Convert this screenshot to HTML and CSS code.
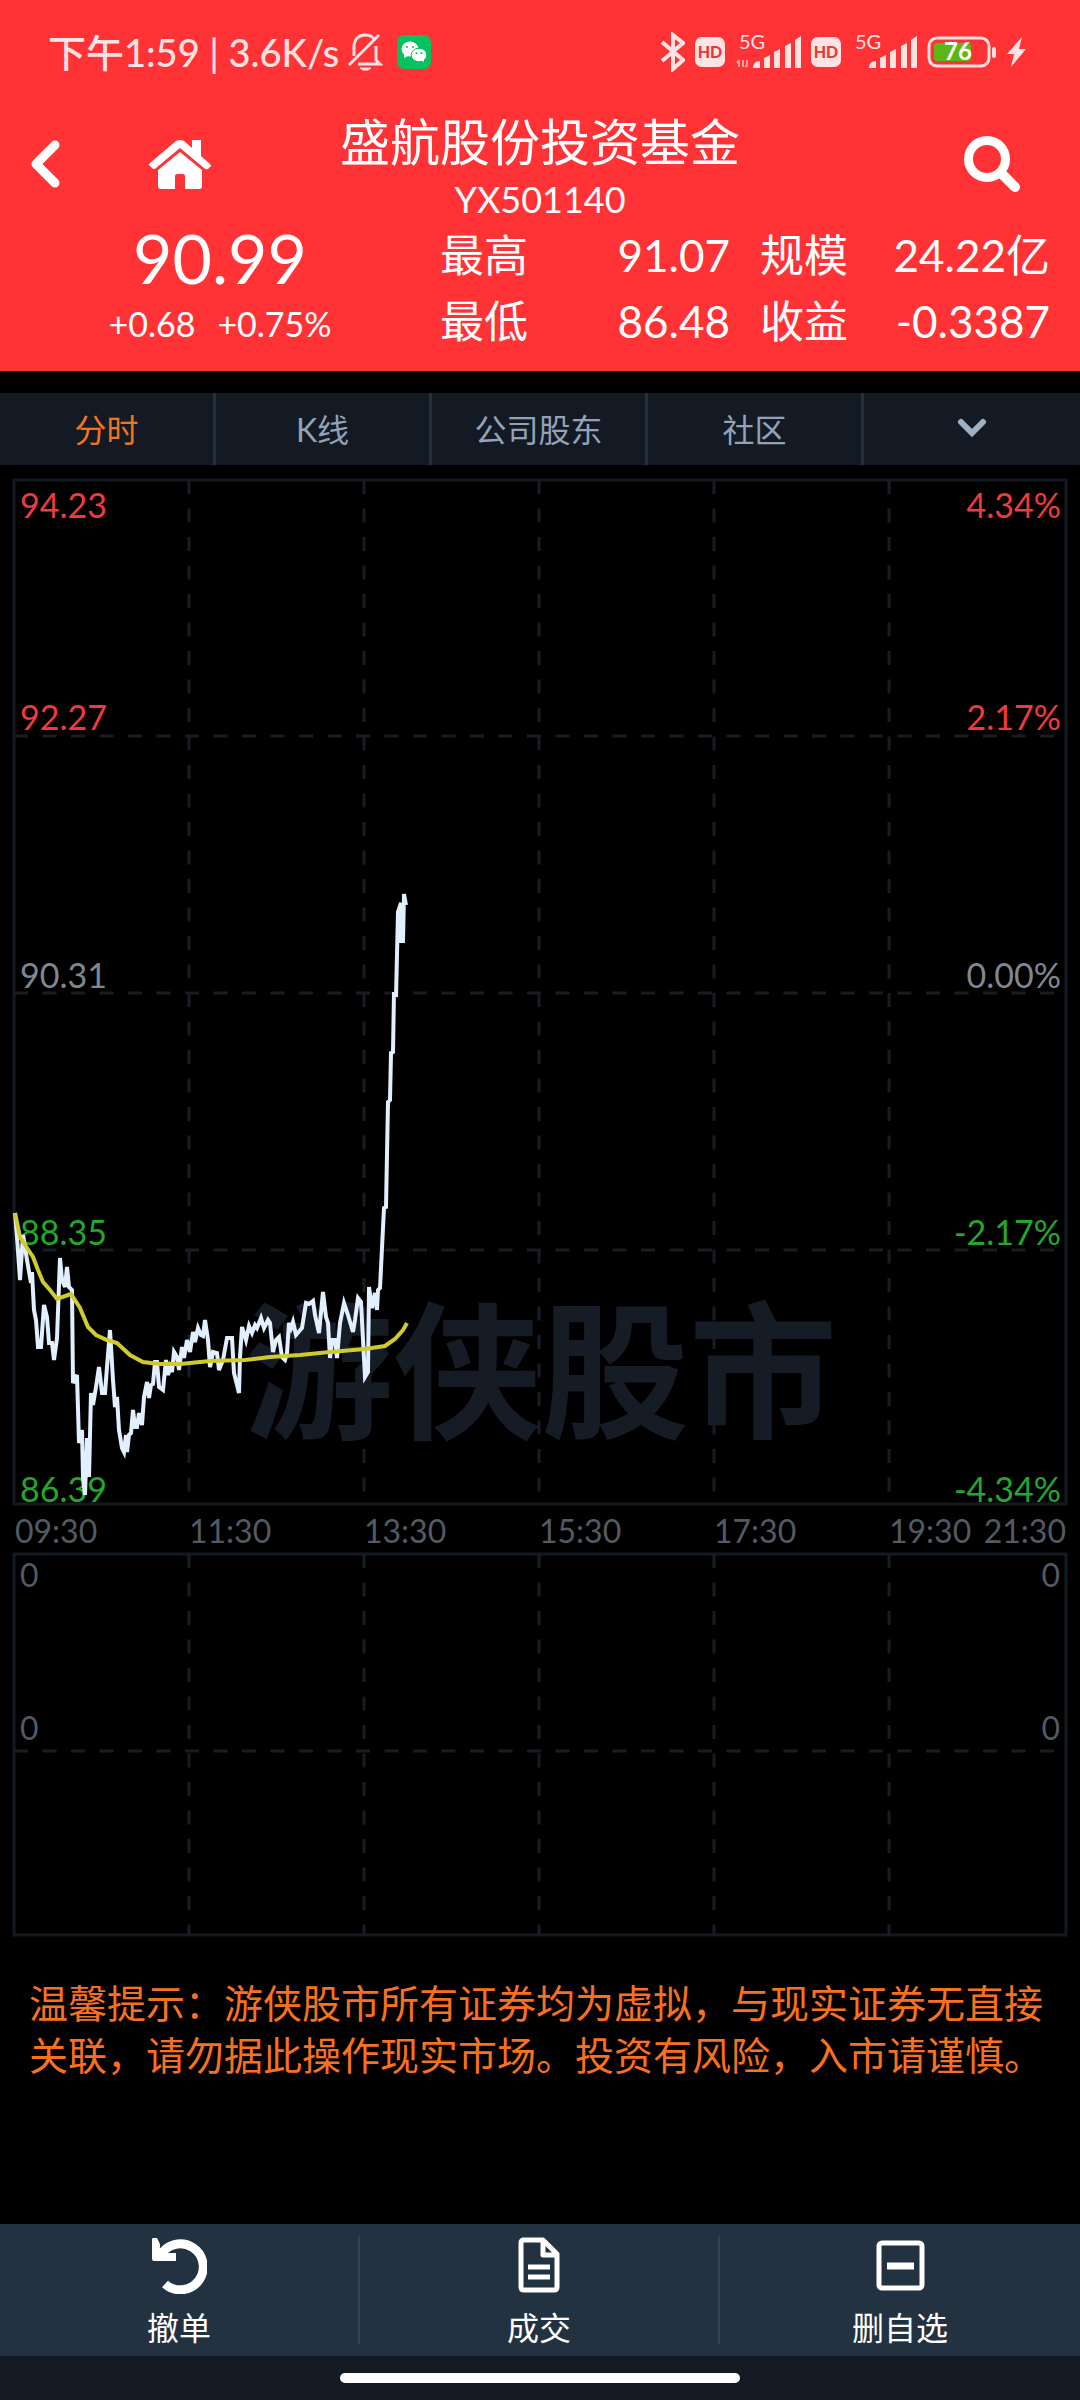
FILE: index.html
```html
<!DOCTYPE html>
<html lang="zh-CN">
<head>
    <meta charset="UTF-8">
    <meta name="viewport" content="width=device-width, initial-scale=1">
    <title>盛航股份投资基金</title>
    <link rel="stylesheet" href="styles.css">
</head>
<body>

    <header class="header">
        <div class="status">
            <span class="status-text">下午1:59 | 3.6K/s</span>
            <svg class="bell" width="36" height="40" viewBox="0 0 36 40" fill="none" stroke="#ffe3e3" stroke-width="3">
                <path d="M7 24V15C7 7 12 3 18 3c4 0 7 1 9 4M29 14v14l4 4H11M2 33L32 3"/>
                <path d="M13 36h11l-3 2h-5z" fill="#ffe3e3" stroke-width="1"/>
            </svg>
            <svg width="34" height="34" viewBox="0 0 34 34">
                <rect width="34" height="34" rx="7" fill="#07c160"/>
                <ellipse cx="13" cy="14" rx="8.5" ry="7.5" fill="#fff"/>
                <path d="M7 19l0 4 4-2z" fill="#fff"/>
                <ellipse cx="22" cy="20" rx="7.8" ry="6.8" fill="#fff" stroke="#07c160"/>
                <path d="M24 25l3 2v-4z" fill="#fff"/>
                <g fill="#07c160"><circle cx="10" cy="12" r="1"/><circle cx="16" cy="12" r="1"/><circle cx="19.500" cy="18" r="1"/><circle cx="24.500" cy="18" r="1"/></g>
            </svg>
            <div class="status-icons">
                <svg width="24" height="40" viewBox="0 0 24 40" fill="none" stroke="#ffe3e3" stroke-width="4">
                    <path d="M1 10l21 18-10 9V3l10 8L1 29"/>
                </svg>
                <span class="hd">HD</span>
                <svg width="66" height="52" viewBox="0 -6 66 52" fill="#ffe3e3">
                    <text class="net" x="4" y="17">5G</text>
                    <path d="M4 28v7M2 31l2-3M8 28v7M12 28v7M10 35l2-2" stroke="#ff9a9a" stroke-width="2"/>
                    <path d="M18 36q0-7 7-7v7zM29 36V26l6-3v13zM39 36V20l6-3v19zM50 36V14l6-3v25zM60 36V8l6-4v32z"/>
                </svg>
                <span class="hd">HD</span>
                <svg width="66" height="52" viewBox="0 -6 66 52" fill="#ffe3e3">
                    <text class="net" x="4" y="17">5G</text>
                    <path d="M18 36q0-7 7-7v7zM29 36V26l6-3v13zM39 36V20l6-3v19zM50 36V14l6-3v25zM60 36V8l6-4v32z"/>
                </svg>
                <svg width="70" height="32" viewBox="0 0 70 32">
                    <rect x="2" y="2" width="60" height="28" rx="8" fill="none" stroke="#ffdede" stroke-width="3"/>
                    <rect x="7" y="7" width="37" height="18" rx="3" fill="#5cb615"/>
                    <rect x="65" y="11" width="4" height="11" rx="2" fill="#ffdede"/>
                    <text class="level" x="31" y="24" text-anchor="middle">76</text>
                </svg>
                <svg width="19" height="32" viewBox="0 0 19 32" fill="#ffe3e3">
                    <path d="M15 1L0 18h7L4 31 19 13h-7z"/>
                </svg>
            </div>
        </div>

        <div class="nav">
            <div class="nav-left">
                <button type="button" class="icon-btn" aria-label="返回">
                    <svg width="30" height="50" viewBox="0 0 30 50" fill="none" stroke="#fff" stroke-width="9" stroke-linecap="round" stroke-linejoin="round">
                        <path d="M25 6L6 25l19 19"/>
                    </svg>
                </button>
                <button type="button" class="icon-btn" aria-label="首页">
                    <svg width="64" height="50" viewBox="0 0 64 50" fill="#fff">
                        <path d="M32 1q2 0 4 1l8 7V1h9v16l9 8q2 2 0 3l-2 2q-2 1-4-1L32 9 8 29q-2 2-4 0l-2-2q-2-1 0-3L28 2q2-1 4-1z"/>
                        <path d="M32 13l22 18v16q0 3-3 3H37V37q0-2-2-2h-6q-2 0-2 2v13H13q-3 0-3-3V31z"/>
                    </svg>
                </button>
            </div>
            <div class="nav-title">
                <h1>盛航股份投资基金</h1>
                <p>YX501140</p>
            </div>
            <div class="nav-right">
                <button type="button" class="icon-btn" aria-label="搜索">
                    <svg width="56" height="56" viewBox="0 0 56 56" fill="none" stroke="#fff">
                        <circle cx="23" cy="23" r="18.500" stroke-width="9"/>
                        <path d="M38 38l13 13" stroke-width="10" stroke-linecap="round"/>
                    </svg>
                </button>
            </div>
        </div>

        <div class="quote">
            <div class="price">
                <div class="last">90.99</div>
                <div class="change"><span>+0.68</span><span>+0.75%</span></div>
            </div>
            <dl class="stats">
                <div><dt>最高</dt><dd>91.07</dd></div>
                <div><dt>最低</dt><dd>86.48</dd></div>
            </dl>
            <dl class="stats">
                <div><dt>规模</dt><dd>24.22亿</dd></div>
                <div><dt>收益</dt><dd>-0.3387</dd></div>
            </dl>
        </div>
    </header>

    <nav class="tabs">
        <button type="button" class="active">分时</button>
        <button type="button">K线</button>
        <button type="button">公司股东</button>
        <button type="button">社区</button>
        <button type="button" aria-label="更多">
            <svg width="30" height="20" viewBox="0 0 30 20" fill="none" stroke="#9fb0c3" stroke-width="6" stroke-linecap="round">
                <path d="M4 4l11 11L26 4"/>
            </svg>
        </button>
    </nav>

    <main>
        <svg class="chart" viewBox="0 465 1080 1480">
            <text class="watermark" x="245" y="1427">游侠股市</text>

            <!-- price grid -->
            <rect class="frame" x="14" y="480" width="1052" height="1024"/>
            <path class="grid" d="M189 480V1504M364 480V1504M539 480V1504M714 480V1504M889 480V1504M14 736H1066M14 993H1066M14 1250H1066"/>

            <!-- volume grid -->
            <rect class="frame" x="14" y="1554" width="1052" height="381"/>
            <path class="grid" d="M189 1554V1935M364 1554V1935M539 1554V1935M714 1554V1935M889 1554V1935M14 1751H1066"/>

            <g class="up">
                <text x="20" y="518">94.23</text>
                <text x="20" y="730">92.27</text>
                <text class="end" x="1061" y="518">4.34%</text>
                <text class="end" x="1061" y="730">2.17%</text>
            </g>
            <g class="flat">
                <text x="20" y="988">90.31</text>
                <text class="end" x="1061" y="988">0.00%</text>
            </g>
            <g class="down">
                <text x="20" y="1245">88.35</text>
                <text x="20" y="1502">86.39</text>
                <text class="end" x="1061" y="1245">-2.17%</text>
                <text class="end" x="1061" y="1502">-4.34%</text>
            </g>
            <g class="time">
                <text x="15" y="1543">09:30</text>
                <text x="189" y="1543">11:30</text>
                <text x="364" y="1543">13:30</text>
                <text x="539" y="1543">15:30</text>
                <text x="714" y="1543">17:30</text>
                <text x="889" y="1543">19:30</text>
                <text class="end" x="1066" y="1543">21:30</text>
                <text x="20" y="1587">0</text>
                <text x="20" y="1740">0</text>
                <text class="end" x="1060" y="1587">0</text>
                <text class="end" x="1060" y="1740">0</text>
            </g>

            <polyline class="line-price" points="15,1213 17,1237 20,1280 23,1235 25,1247 27,1260 31,1283 32,1272 34,1310 36,1320 38,1347 41,1347 44,1305 47,1317 49,1343 52,1343 54,1360 57,1338 60,1258 62,1280 65,1287 67,1267 69,1287 72,1290 73,1383 77,1375 79,1443 82,1430 83,1477 85,1495 87,1438 89,1477 91,1393 93,1405 96,1387 99,1367 102,1393 105,1393 107,1367 110,1330 113,1380 115,1407 117,1397 119,1430 122,1448 124,1452 126,1435 127,1452 129,1435 131,1433 133,1410 135,1427 137,1427 139,1413 142,1425 144,1397 147,1382 149,1398 151,1385 153,1384 155,1362 157,1362 159,1387 163,1390 166,1360 168,1375 170,1367 172,1372 174,1352 177,1357 179,1370 182,1347 184,1358 187,1340 190,1352 193,1332 195,1342 198,1328 201,1335 203,1336 205,1320 208,1340 210,1367 213,1352 217,1353 219,1370 223,1360 227,1338 232,1338 234,1373 239,1393 240,1357 242,1327 246,1340 249,1326 252,1333 255,1325 257,1328 261,1318 264,1328 268,1320 270,1323 273,1352 276,1340 279,1337 282,1357 285,1360 287,1353 289,1323 291,1328 293,1322 296,1335 302,1328 306,1303 309,1304 313,1301 315,1315 319,1333 323,1292 326,1317 328,1323 330,1358 332,1340 335,1340 337,1358 340,1323 344,1303 348,1315 353,1332 355,1320 358,1298 361,1302 365,1377 368,1372 369,1287 372,1308 375,1293 377,1310 378,1290 380,1288 384,1208 386,1207 388,1102 390,1100 391,1053 393,1052 394,992 396,997 398,912 401,903 400,941 403,941 404,894 406,905"/>
            <polyline class="line-avg" points="15,1213 20,1237 27,1248 33,1257 38,1270 43,1282 50,1290 57,1299 71,1294 80,1308 88,1327 96,1335 107,1340 117,1343 130,1355 143,1362 160,1364 180,1364 200,1362 210,1361 245,1360 270,1357 300,1355 330,1352 365,1349 385,1346 395,1339 403,1330 407,1323"/>
        </svg>

        <p class="notice">温馨提示：游侠股市所有证券均为虚拟，与现实证券无直接关联，请勿据此操作现实市场。投资有风险，入市请谨慎。</p>
    </main>

    <footer class="footer">
        <div class="actions">
            <button type="button">
                <svg width="56" height="58" viewBox="0 0 56 58" fill="none" stroke="#fff">
                    <path d="M9 20A23 23 0 1 1 14 48" stroke-width="9"/>
                    <path d="M1 3q0-1 1-1h4l3 6v9h16v8H3q-2 0-2-2z" fill="#fff" stroke="none"/>
                </svg>
                <span>撤单</span>
            </button>
            <button type="button">
                <svg width="44" height="58" viewBox="0 0 44 58" fill="none" stroke="#fff" stroke-width="5" stroke-linejoin="round">
                    <path d="M26 4H7q-3 0-3 3v44q0 3 3 3h30q3 0 3-3V18zM26 4v15h14M11 31h22M11 41h22"/>
                </svg>
                <span>成交</span>
            </button>
            <button type="button">
                <svg width="50" height="58" viewBox="0 0 50 58" fill="none" stroke="#fff" stroke-width="5">
                    <rect x="4" y="7" width="43" height="45" rx="3"/>
                    <path d="M12 30h27" stroke-width="7"/>
                </svg>
                <span>删自选</span>
            </button>
        </div>
        <div class="home-bar"></div>
    </footer>

</body>
</html>
```

FILE: styles.css
```css
* {
    box-sizing: border-box;
}
body {
    margin: 0;
    min-height: 100vh;
    display: flex;
    flex-direction: column;
    background: #000;
    color: #fff;
    font-family: Lato, "Noto Sans CJK SC", sans-serif;
}
h1, p, dl, dd {
    margin: 0;
    font-weight: normal;
}
button {
    background: none;
    border: none;
    padding: 0;
    color: inherit;
    font-family: inherit;
    cursor: pointer;
}
svg {
    display: block;
}

/* header */
.header {
    background: #ff3336;
    padding-bottom: 17px;
}
.status {
    display: flex;
    align-items: center;
    height: 104px;
    padding: 0 54px 0 48px;
    color: #ffe3e3;
}
.status-text {
    font-size: 38px;
    font-weight: 500;
    line-height: 44px;
    white-space: nowrap;
}
.bell {
    margin: 0 14px 0 8px;
}
.status-icons {
    display: flex;
    align-items: center;
    gap: 10px;
    margin-left: auto;
}
.hd {
    width: 30px;
    border-radius: 7px;
    background: #ffe3e3;
    color: #e8383b;
    font-size: 16px;
    font-weight: 900;
    line-height: 30px;
    text-align: center;
}
.net {
    font-size: 20px;
}
.level {
    font-size: 24px;
    font-weight: bold;
    fill: #fff;
}
.nav {
    display: grid;
    grid-template-columns: 1fr auto 1fr;
    align-items: start;
    padding: 8px 60px 0 30px;
}
.nav-left {
    display: flex;
    gap: 88px;
    padding-top: 27px;
}
.nav-title {
    text-align: center;
    margin-left: 30px;
}
.nav-title h1 {
    font-size: 50px;
    line-height: 60px;
}
.nav-title p {
    padding-top: 4px;
    font-size: 36px;
    line-height: 46px;
}
.nav-right {
    display: flex;
    justify-content: flex-end;
    padding-top: 24px;
}
.quote {
    display: grid;
    grid-template-columns: 38fr 29fr 29fr;
    column-gap: 30px;
    padding: 0 30px;
}
.price {
    text-align: center;
}
.last {
    font-size: 68px;
    line-height: 72px;
}
.change {
    display: flex;
    justify-content: center;
    gap: 22px;
    font-size: 34px;
    line-height: 60px;
}
.stats div {
    display: flex;
    justify-content: space-between;
    font-size: 44px;
    line-height: 66px;
}

/* tabs */
.tabs {
    display: grid;
    grid-template-columns: repeat(5, 1fr);
    height: 72px;
    margin-top: 22px;
    background: #131a24;
}
.tabs button {
    display: flex;
    align-items: center;
    justify-content: center;
    padding-bottom: 3px;
    border-right: 3px solid #25303d;
    color: #93a3b5;
    font-size: 32px;
}
.tabs button:last-child {
    border-right: none;
}
.tabs .active {
    color: #f27421;
}

/* chart */
.chart {
    width: 100%;
    font-size: 34px;
}
.frame {
    fill: none;
    stroke: #131a22;
    stroke-width: 3;
}
.grid {
    fill: none;
    stroke: #1a1c24;
    stroke-width: 3;
    stroke-dasharray: 14 14.5;
}
.watermark {
    fill: #151c26;
    font-size: 148px;
    font-weight: bold;
}
.up {
    fill: #f13a3d;
}
.flat {
    fill: #7f8791;
}
.down {
    fill: #23a82b;
}
.time {
    fill: #525a64;
    font-size: 32px;
}
.end {
    text-anchor: end;
}
.line-price {
    fill: none;
    stroke: #e2efff;
    stroke-width: 4;
}
.line-avg {
    fill: none;
    stroke: #cfcb2c;
    stroke-width: 4;
}
.notice {
    padding: 32px 29px;
    color: #f9701f;
    font-size: 39px;
    line-height: 52px;
}

/* footer */
.footer {
    margin-top: auto;
    background: #131a24;
}
.actions {
    display: grid;
    grid-template-columns: repeat(3, 1fr);
    padding: 12px 0;
    background: #233241;
}
.actions button {
    display: flex;
    flex-direction: column;
    align-items: center;
    justify-content: space-between;
    height: 108px;
    border-right: 2px solid #33424f;
    font-size: 32px;
    line-height: 32px;
}
.actions button:last-child {
    border-right: none;
}
.home-bar {
    width: 37%;
    height: 10px;
    margin: 17px auto;
    border-radius: 5px;
    background: #fff;
}
```
